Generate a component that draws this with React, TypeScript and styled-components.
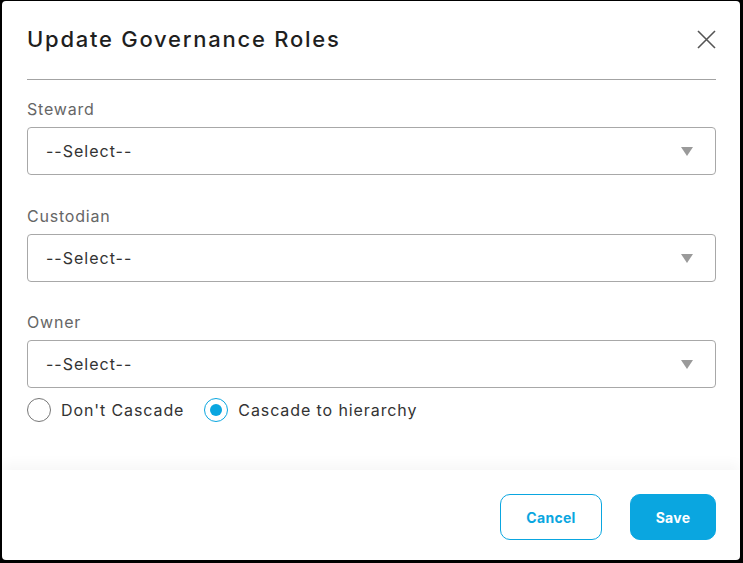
import * as React from 'react';
import styled, { createGlobalStyle } from 'styled-components';

const GlobalStyle = createGlobalStyle`
    html, body {
        margin: 0;
        padding: 0;
        background: #000;
    }
    body {
        font-family: Inter, "Open Sans", "Liberation Sans", sans-serif;
    }
    * {
        box-sizing: border-box;
    }
`;

const Modal = styled.div`
    margin: 1px 3px 3px 2px;
    height: 559px;
    background: #fff;
    border-radius: 4px;
    display: flex;
    flex-direction: column;
    overflow: hidden;
`;

const Header = styled.div`
    margin: 0 24px 0 25px;
    height: 79px;
    display: flex;
    align-items: center;
    justify-content: space-between;
    border-bottom: 1px solid #a3a3a3;
    padding-bottom: 2px;
`;

const Title = styled.h2`
    margin: 0;
    font-size: 22px;
    font-weight: 500;
    color: #1f1f1f;
    letter-spacing: 1.75px;
`;

const CloseButton = styled.button`
    border: none;
    background: none;
    padding: 0;
    width: 20px;
    height: 20px;
    display: flex;
    align-items: center;
    justify-content: center;
    cursor: pointer;
`;

const Body = styled.div`
    flex: 1;
    padding: 18px 24px 0 25px;
    display: flex;
    flex-direction: column;
`;

const Field = styled.div<{ gap: number }>`
    display: flex;
    flex-direction: column;
    margin-bottom: ${({ gap }) => gap}px;
`;

const Label = styled.label`
    font-size: 16px;
    line-height: 22px;
    letter-spacing: 0.8px;
    color: #666;
    margin-bottom: 7px;
`;

const SelectBox = styled.div`
    height: 48px;
    border: 1px solid #a8a8a8;
    border-radius: 4px;
    display: flex;
    align-items: center;
    justify-content: space-between;
    padding: 0 22px 0 18px;
    font-size: 16px;
    letter-spacing: 1px;
    color: #333;
`;

const Arrow = styled.span`
    width: 0;
    height: 0;
    border-left: 6px solid transparent;
    border-right: 6px solid transparent;
    border-top: 9px solid #9a9a9a;
`;

const RadioRow = styled.div`
    display: flex;
    align-items: center;
    gap: 20px;
`;

const RadioOption = styled.label`
    display: flex;
    align-items: center;
    gap: 10px;
    font-size: 16px;
    letter-spacing: 0.9px;
    color: #333;
    cursor: pointer;
`;

const RadioCircle = styled.span<{ checked: boolean }>`
    width: 24px;
    height: 24px;
    border-radius: 50%;
    border: 1px solid ${({ checked }) => checked ? '#0aa6e0' : '#777'};
    display: flex;
    align-items: center;
    justify-content: center;
    &::after {
        content: '';
        width: 12px;
        height: 12px;
        border-radius: 50%;
        background: #0aa6e0;
        display: ${({ checked }) => checked ? 'block' : 'none'};
    }
`;

const Footer = styled.div`
    height: 90px;
    padding: 24px 24px 0;
    display: flex;
    justify-content: flex-end;
    gap: 28px;
    box-shadow: 0 -6px 12px rgba(0, 0, 0, 0.035);
`;

const Button = styled.button<{ primary?: boolean }>`
    height: 46px;
    border-radius: 10px;
    font-family: inherit;
    font-size: 14px;
    font-weight: 700;
    letter-spacing: 0.3px;
    cursor: pointer;
    border: 1px solid #0aa6e0;
    background: ${({ primary }) => primary ? '#0aa6e0' : '#fff'};
    color: ${({ primary }) => primary ? '#fff' : '#0aa6e0'};
    width: ${({ primary }) => primary ? '86px' : '102px'};
`;

const fields = [
    { label: 'Steward', gap: 30 },
    { label: 'Custodian', gap: 29 },
    { label: 'Owner', gap: 10 },
];

export default function App() {
    const [cascade, setCascade] = React.useState<boolean>(true);

    return (
        <>
            <GlobalStyle />
            <Modal>
                <Header>
                    <Title>Update Governance Roles</Title>
                    <CloseButton aria-label="Close">
                        <svg width="19" height="19" viewBox="0 0 19 19">
                            <path d="M1 1 L18 18 M18 1 L1 18" stroke="#555" strokeWidth="1.6" fill="none" />
                        </svg>
                    </CloseButton>
                </Header>
                <Body>
                    {fields.map(f => (
                        <Field key={f.label} gap={f.gap}>
                            <Label>{f.label}</Label>
                            <SelectBox>
                                <span>--Select--</span>
                                <Arrow />
                            </SelectBox>
                        </Field>
                    ))}
                    <RadioRow>
                        <RadioOption onClick={() => setCascade(false)}>
                            <RadioCircle checked={!cascade} />
                            Don't Cascade
                        </RadioOption>
                        <RadioOption onClick={() => setCascade(true)}>
                            <RadioCircle checked={cascade} />
                            Cascade to hierarchy
                        </RadioOption>
                    </RadioRow>
                </Body>
                <Footer>
                    <Button>Cancel</Button>
                    <Button primary>Save</Button>
                </Footer>
            </Modal>
        </>
    );
}
